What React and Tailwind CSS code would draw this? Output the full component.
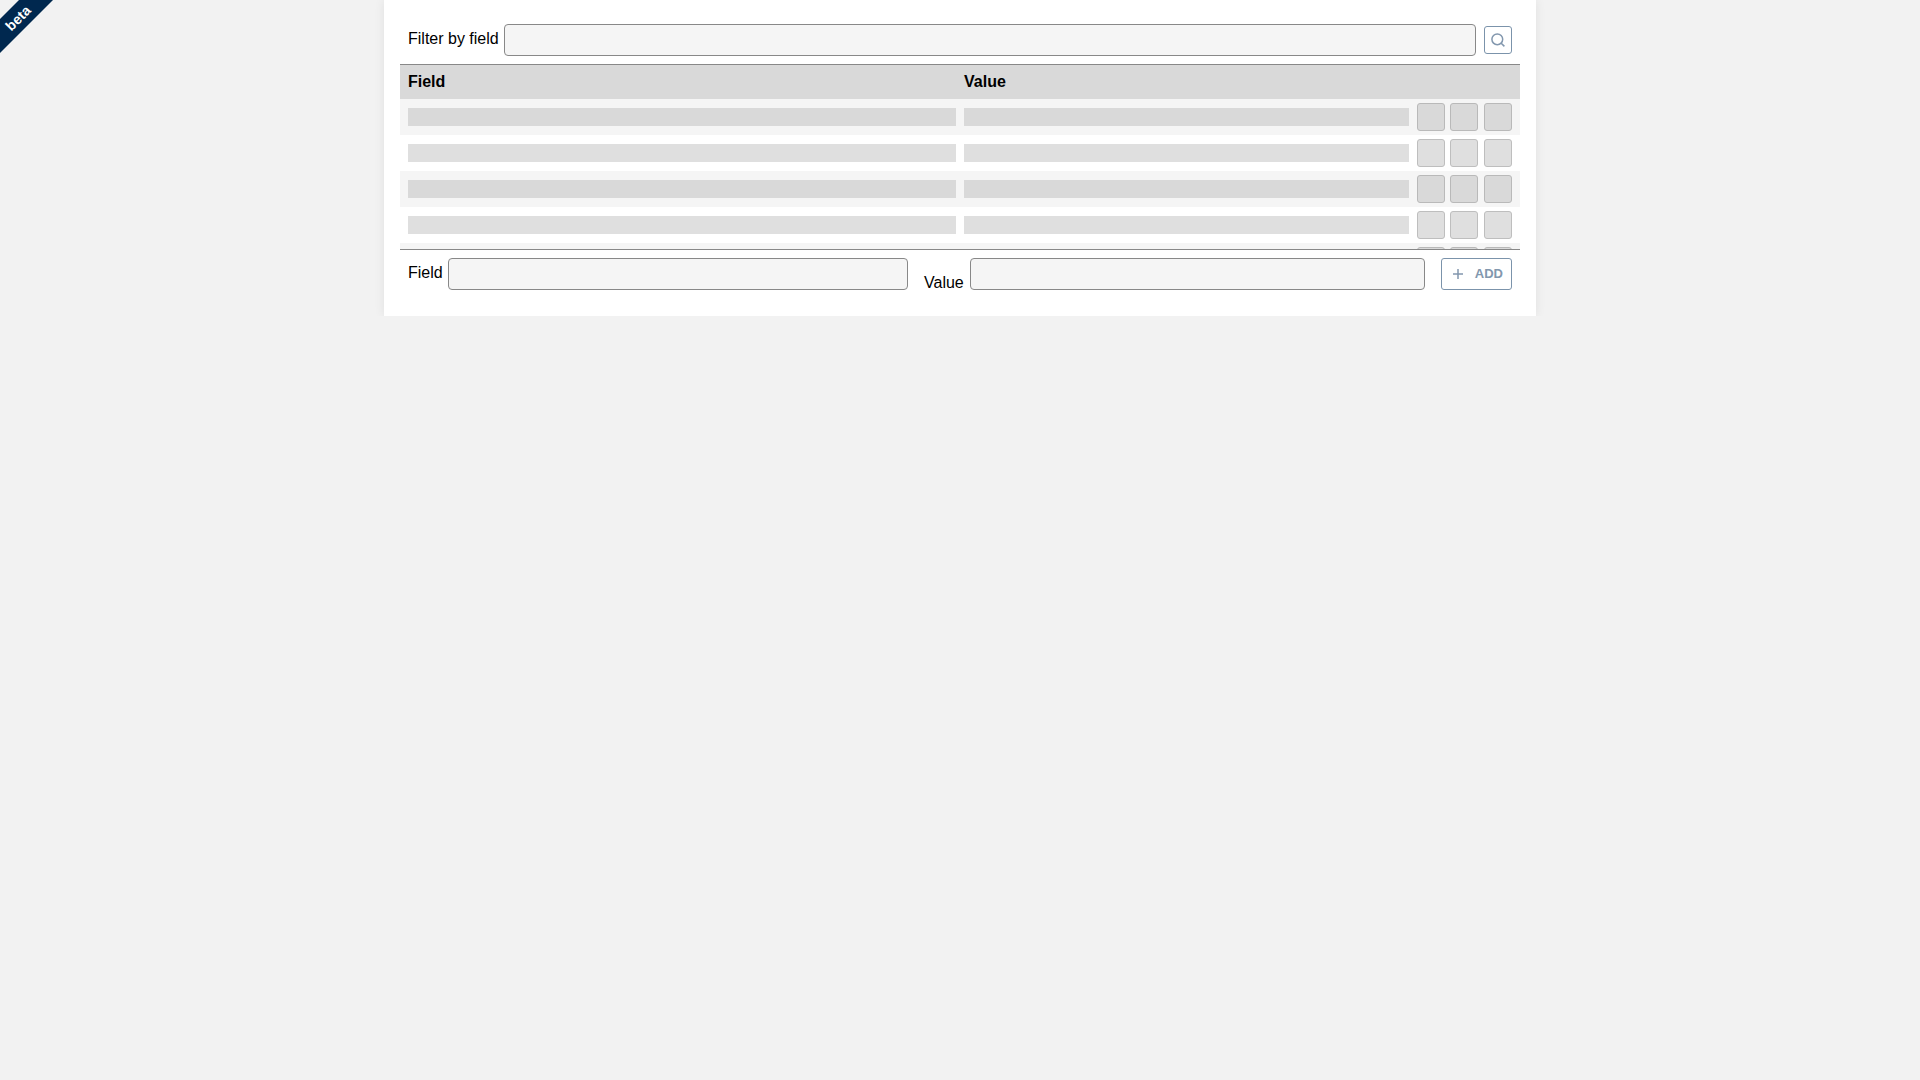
import React from "react";

const ROWS = [0, 1, 2, 3, 4, 5];

const inputClass =
  "h-8 min-w-0 flex-1 rounded border border-[#888888] bg-[#f5f5f5] px-2 outline-none";

function SearchIcon() {
  return (
    <svg width="16" height="16" viewBox="0 0 16 16" fill="none" stroke="currentColor" strokeWidth="1.5" aria-hidden="true">
      <circle cx="7.3" cy="7.3" r="5.4" />
      <path d="M11.2 11.2L14.4 14.4" />
    </svg>
  );
}

function PlusIcon() {
  return (
    <svg width="10" height="10" viewBox="0 0 10 10" fill="none" stroke="currentColor" strokeWidth="1.5" aria-hidden="true">
      <path d="M5 0V10M0 5H10" />
    </svg>
  );
}

function Bar() {
  return <div className="h-[18px] bg-[#dfdfdf] group-odd:bg-[#d9d9d9]" />;
}

function ActionPlaceholders() {
  const box =
    "h-7 w-7 rounded-[3px] border border-[#bebebe] bg-[#dfdfdf] group-odd:border-[#b9b9b9] group-odd:bg-[#d9d9d9]";
  return (
    <div className="flex">
      <button type="button" disabled aria-label="Edit" className={box} />
      <button type="button" disabled aria-label="Copy" className={box + " ml-[5px]"} />
      <button type="button" disabled aria-label="Delete" className={box + " ml-[6px]"} />
    </div>
  );
}

export default function App() {
  return (
    <div className="min-h-screen bg-[#f2f2f2] font-['Liberation_Sans',Arial,sans-serif] text-base text-black">
      <div className="absolute top-0 left-0 h-16 w-16 overflow-hidden">
        <div className="absolute -left-[42px] top-[6px] h-6 w-30 -rotate-45 bg-[#00284f] text-center text-sm leading-6 font-bold text-white">
          beta
        </div>
      </div>

      <div className="overflow-hidden">
        <main className="mx-auto w-3/5 bg-white px-4 pt-6 pb-[26px] shadow-[0_0_10px_rgba(0,0,0,0.08)]">
          <div className="flex items-start px-2 pb-2">
            <label htmlFor="filter" className="mr-[5px] leading-[30px]">Filter by field</label>
            <input id="filter" type="text" className={inputClass} />
            <button
              type="button"
              aria-label="Search"
              className="ml-2 flex h-7 w-7 items-center justify-center self-center rounded-[3px] border border-[#7b93ab] text-[#8297ae]"
            >
              <SearchIcon />
            </button>
          </div>

          <div className="h-[186px] overflow-hidden border-y border-[#888888]">
            <table className="w-full table-fixed border-collapse">
              <colgroup>
                <col className="w-1/2" />
                <col />
                <col className="w-[107px]" />
              </colgroup>
              <thead>
                <tr className="h-[34px] bg-[#d9d9d9] text-left">
                  <th className="pr-1 pl-2 font-bold">Field</th>
                  <th className="px-1 font-bold">Value</th>
                  <th aria-label="Actions" />
                </tr>
              </thead>
              <tbody>
                {ROWS.map((row) => (
                  <tr key={row} className="group h-9 odd:bg-[#f5f5f5]">
                    <td className="py-1 pr-1 pl-2"><Bar /></td>
                    <td className="px-1 py-1"><Bar /></td>
                    <td className="py-1 pr-2 pl-1"><ActionPlaceholders /></td>
                  </tr>
                ))}
              </tbody>
            </table>
          </div>

          <form className="flex px-2 pt-2" onSubmit={(e) => e.preventDefault()}>
            <div className="flex w-[500px] shrink items-start">
              <label htmlFor="field" className="mr-[5px] leading-[30px]">Field</label>
              <input id="field" type="text" className={inputClass} />
            </div>
            <div className="ml-4 flex min-w-0 flex-1 items-end">
              <label htmlFor="value" className="mr-[6px] leading-[14px]">Value</label>
              <input id="value" type="text" className={inputClass} />
            </div>
            <button
              type="submit"
              className="ml-4 flex h-8 w-[71px] items-center justify-between rounded-[3px] border border-[#7b93ab] pr-2 pl-[11px] text-[13px] font-bold text-[#8297ae]"
            >
              <PlusIcon />
              ADD
            </button>
          </form>
        </main>
      </div>
    </div>
  );
}
